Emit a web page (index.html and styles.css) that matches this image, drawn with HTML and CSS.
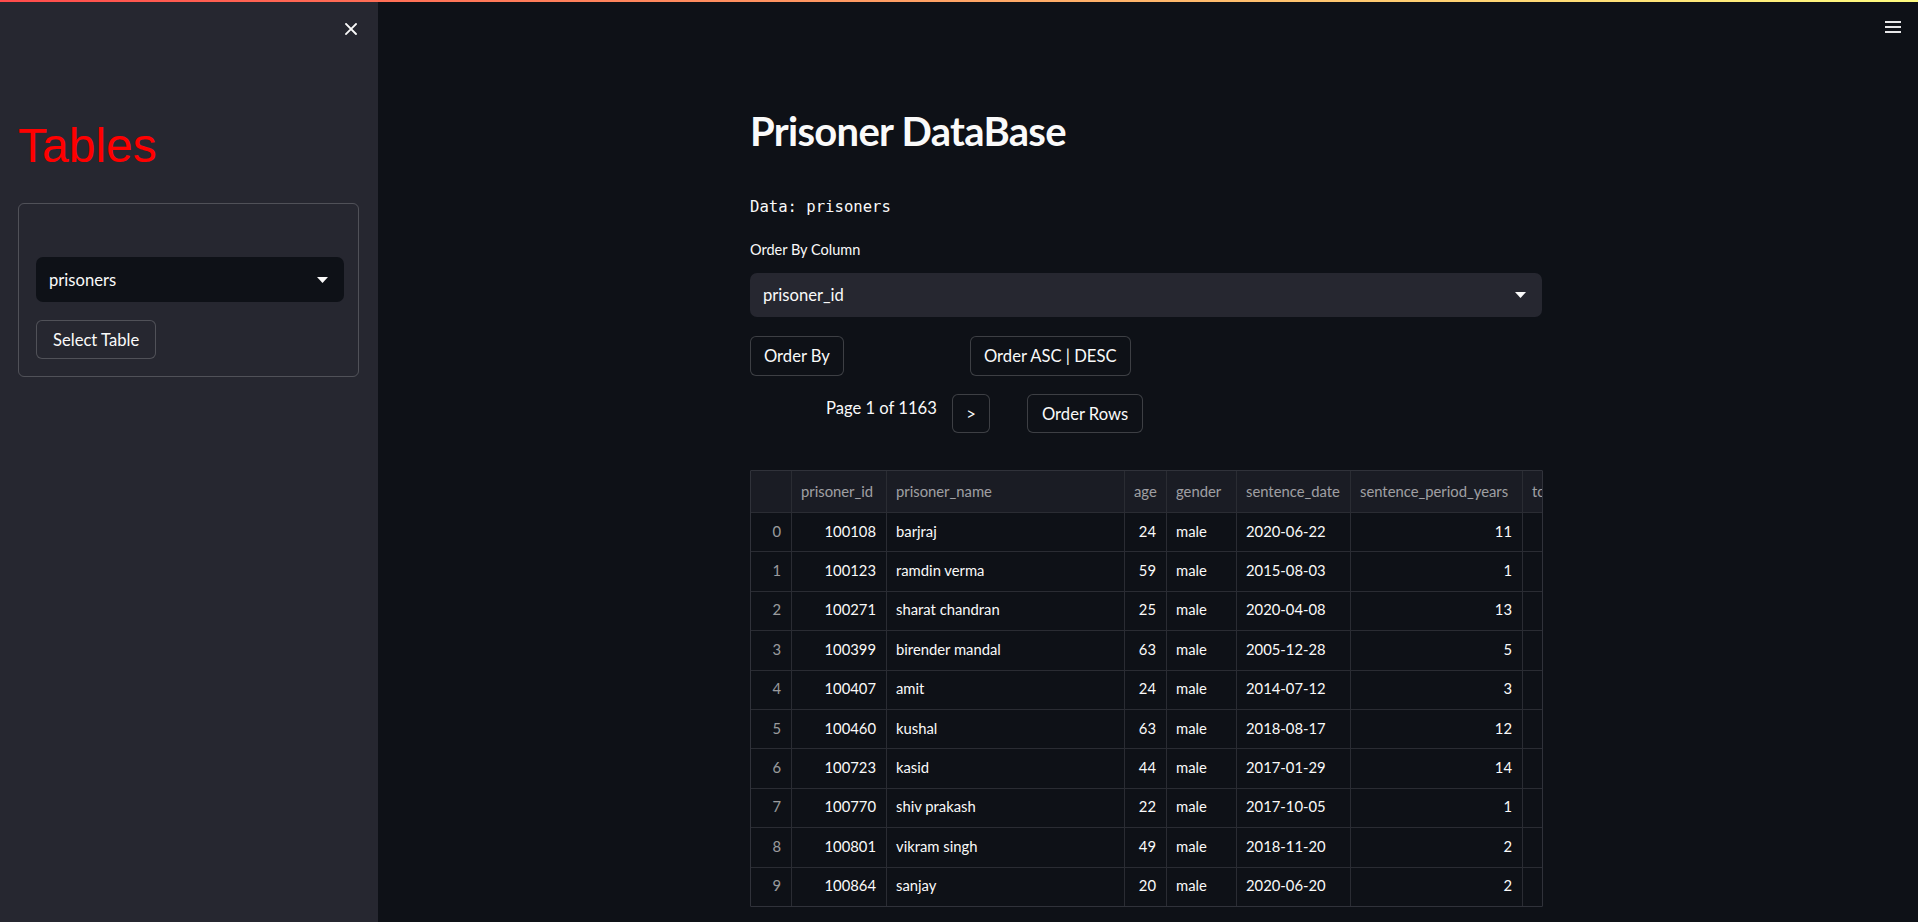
FILE: index.html
```html
<!DOCTYPE html>
<html lang="en">
<head>
<meta charset="utf-8">
<title>Prisoner DataBase</title>
<link rel="stylesheet" href="styles.css">
</head>
<body>
<div class="decoration"></div>
<div class="app">
  <aside class="sidebar">
    <div class="sb-head">
      <svg class="close-icon" width="12" height="12" viewBox="0 0 12 12"><path d="M1 1L11 11M11 1L1 11" stroke="#fafafa" stroke-width="1.8" stroke-linecap="square"/></svg>
    </div>
    <div class="sb-content">
      <h2 class="sb-title">Tables</h2>
      <div class="sb-form">
        <div class="select select-dark">
          <span>prisoners</span>
          <svg class="caret" width="11" height="6" viewBox="0 0 11 6"><polygon points="0,0 11,0 5.5,6" fill="#fafafa"/></svg>
        </div>
        <button class="btn btn-sb">Select Table</button>
      </div>
    </div>
  </aside>
  <main class="main">
    <div class="toolbar">
      <svg width="16" height="12" viewBox="0 0 16 12"><rect x="0" y="0" width="16" height="2" fill="#e6e6e8"/><rect x="0" y="5" width="16" height="2" fill="#e6e6e8"/><rect x="0" y="10" width="16" height="2" fill="#e6e6e8"/></svg>
    </div>
    <div class="container">
      <h1 class="title">Prisoner DataBase</h1>
      <p class="mono">Data: prisoners</p>
      <label class="label">Order By Column</label>
      <div class="select select-main">
        <span>prisoner_id</span>
        <svg class="caret" width="11" height="6" viewBox="0 0 11 6"><polygon points="0,0 11,0 5.5,6" fill="#fafafa"/></svg>
      </div>
      <div class="row row-one">
        <div><button class="btn">Order By</button></div>
        <div><button class="btn">Order ASC | DESC</button></div>
      </div>
      <div class="row row-two">
        <div class="page-text">Page 1 of 1163</div>
        <div><button class="btn btn-sm btn-next">&gt;</button></div>
        <div><button class="btn btn-sm">Order Rows</button></div>
      </div>
      <div class="grid">
        <div class="hc"></div>
        <div class="hc">prisoner_id</div>
        <div class="hc">prisoner_name</div>
        <div class="hc">age</div>
        <div class="hc">gender</div>
        <div class="hc">sentence_date</div>
        <div class="hc">sentence_period_years</div>
        <div class="hc">total_sentence</div>

        <div class="c idx">0</div><div class="c num">100108</div><div class="c">barjraj</div><div class="c num">24</div><div class="c">male</div><div class="c">2020-06-22</div><div class="c num">11</div><div class="c"></div>
        <div class="c idx">1</div><div class="c num">100123</div><div class="c">ramdin verma</div><div class="c num">59</div><div class="c">male</div><div class="c">2015-08-03</div><div class="c num">1</div><div class="c"></div>
        <div class="c idx">2</div><div class="c num">100271</div><div class="c">sharat chandran</div><div class="c num">25</div><div class="c">male</div><div class="c">2020-04-08</div><div class="c num">13</div><div class="c"></div>
        <div class="c idx">3</div><div class="c num">100399</div><div class="c">birender mandal</div><div class="c num">63</div><div class="c">male</div><div class="c">2005-12-28</div><div class="c num">5</div><div class="c"></div>
        <div class="c idx">4</div><div class="c num">100407</div><div class="c">amit</div><div class="c num">24</div><div class="c">male</div><div class="c">2014-07-12</div><div class="c num">3</div><div class="c"></div>
        <div class="c idx">5</div><div class="c num">100460</div><div class="c">kushal</div><div class="c num">63</div><div class="c">male</div><div class="c">2018-08-17</div><div class="c num">12</div><div class="c"></div>
        <div class="c idx">6</div><div class="c num">100723</div><div class="c">kasid</div><div class="c num">44</div><div class="c">male</div><div class="c">2017-01-29</div><div class="c num">14</div><div class="c"></div>
        <div class="c idx">7</div><div class="c num">100770</div><div class="c">shiv prakash</div><div class="c num">22</div><div class="c">male</div><div class="c">2017-10-05</div><div class="c num">1</div><div class="c"></div>
        <div class="c idx">8</div><div class="c num">100801</div><div class="c">vikram singh</div><div class="c num">49</div><div class="c">male</div><div class="c">2018-11-20</div><div class="c num">2</div><div class="c"></div>
        <div class="c idx">9</div><div class="c num">100864</div><div class="c">sanjay</div><div class="c num">20</div><div class="c">male</div><div class="c">2020-06-20</div><div class="c num">2</div><div class="c"></div>
      </div>
    </div>
  </main>
</div>
</body>
</html>
```
FILE: styles.css
```css
* { box-sizing: border-box; }
html, body {
  margin: 0;
  padding: 0;
  height: 100%;
}
body {
  background: #0e1117;
  color: #fafafa;
  font-family: "Source Sans Pro", Lato, "Noto Sans", sans-serif;
  overflow: hidden;
  position: relative;
}
.decoration {
  position: absolute;
  top: 0;
  left: 0;
  right: 0;
  height: 2px;
  background: linear-gradient(90deg, #ff4b4b, #fffd80);
  z-index: 5;
}
.app {
  display: flex;
  height: 922px;
}
.sidebar {
  width: 378px;
  flex: none;
  background: #262730;
}
.sb-head {
  height: 57px;
  display: flex;
  justify-content: flex-end;
  align-items: flex-start;
  padding: 23px 21px 0 0;
}
.close-icon { display: block; }
.sb-content {
  padding: 0 19px 0 18px;
}
.sb-title {
  margin: 61px 0 0 0;
  font-family: "Liberation Sans", Arial, sans-serif;
  font-weight: 400;
  font-size: 48px;
  line-height: normal;
  color: #ff0000;
}
.sb-form {
  margin-top: 30px;
  border: 1px solid rgba(250, 250, 250, 0.2);
  border-radius: 6px;
  padding: 53px 14px 17px 17px;
  display: flex;
  flex-direction: column;
  align-items: flex-start;
  gap: 18px;
}
.select {
  width: 100%;
  display: flex;
  align-items: center;
  justify-content: space-between;
  border-radius: 7px;
  padding: 0 16px 0 13px;
  font-size: 16.6px;
  line-height: 20px;
  color: #fafafa;
}
.select-dark {
  height: 45px;
  background: #0e1117;
}
.select-main {
  height: 44px;
  background: #262730;
  margin-top: 13px;
}
.caret { display: block; }
.btn {
  font-family: inherit;
  font-size: 16.6px;
  line-height: 20px;
  color: #fafafa;
  background: #0e1117;
  border: 1px solid rgba(250, 250, 250, 0.2);
  border-radius: 6px;
  height: 40px;
  padding: 0 13px;
  cursor: pointer;
}
.btn-sb {
  background: #262730;
  height: 39px;
  padding: 0 16px;
}
.btn-sm { height: 39px; padding: 0 14px; }
.btn-next { width: 38px; padding: 0; }
.main {
  flex: 1;
  position: relative;
  padding-right: 4px;
}
.toolbar {
  position: absolute;
  top: 21px;
  right: 17px;
}
.toolbar svg { display: block; }
.container {
  width: 792px;
  margin: 0 auto;
  padding-top: 107px;
}
.title {
  margin: 0;
  font-size: 40px;
  line-height: 48px;
  font-weight: 700;
  letter-spacing: -0.7px;
}
.mono {
  margin: 40px 0 0 0;
  font-family: "DejaVu Sans Mono", "Liberation Mono", monospace;
  font-size: 15.6px;
  line-height: 24px;
}
.label {
  display: block;
  margin-top: 21px;
  font-size: 14.5px;
  line-height: 20px;
}
.row {
  display: grid;
  align-items: start;
}
.row-one {
  margin-top: 19px;
  grid-template-columns: 220px auto;
}
.row-two {
  margin-top: 18px;
  grid-template-columns: 202px 75px auto;
}
.page-text {
  padding: 2px 0 0 76px;
  font-size: 16.6px;
  line-height: 24px;
}
.grid {
  margin-top: 37px;
  width: 793px;
  border: 1px solid #30323a;
  border-radius: 1px;
  overflow: hidden;
  display: grid;
  grid-template-columns: 40px 94px 237px 41px 69px 113px 171px 120px;
  grid-template-rows: 41px repeat(10, 38.4px);
  gap: 1px;
  background: #2a2c33;
  font-size: 14.8px;
}
.hc {
  background: #1a1c24;
  color: rgba(250, 250, 250, 0.6);
  display: flex;
  align-items: center;
  padding: 0 9px 1px;
  white-space: nowrap;
  overflow: hidden;
}
.c {
  background: #0e1117;
  display: flex;
  align-items: center;
  padding: 0 9px 3px;
  white-space: nowrap;
}
.num, .idx {
  justify-content: flex-end;
  padding-right: 10px;
}
.idx {
  color: rgba(250, 250, 250, 0.6);
}
```
